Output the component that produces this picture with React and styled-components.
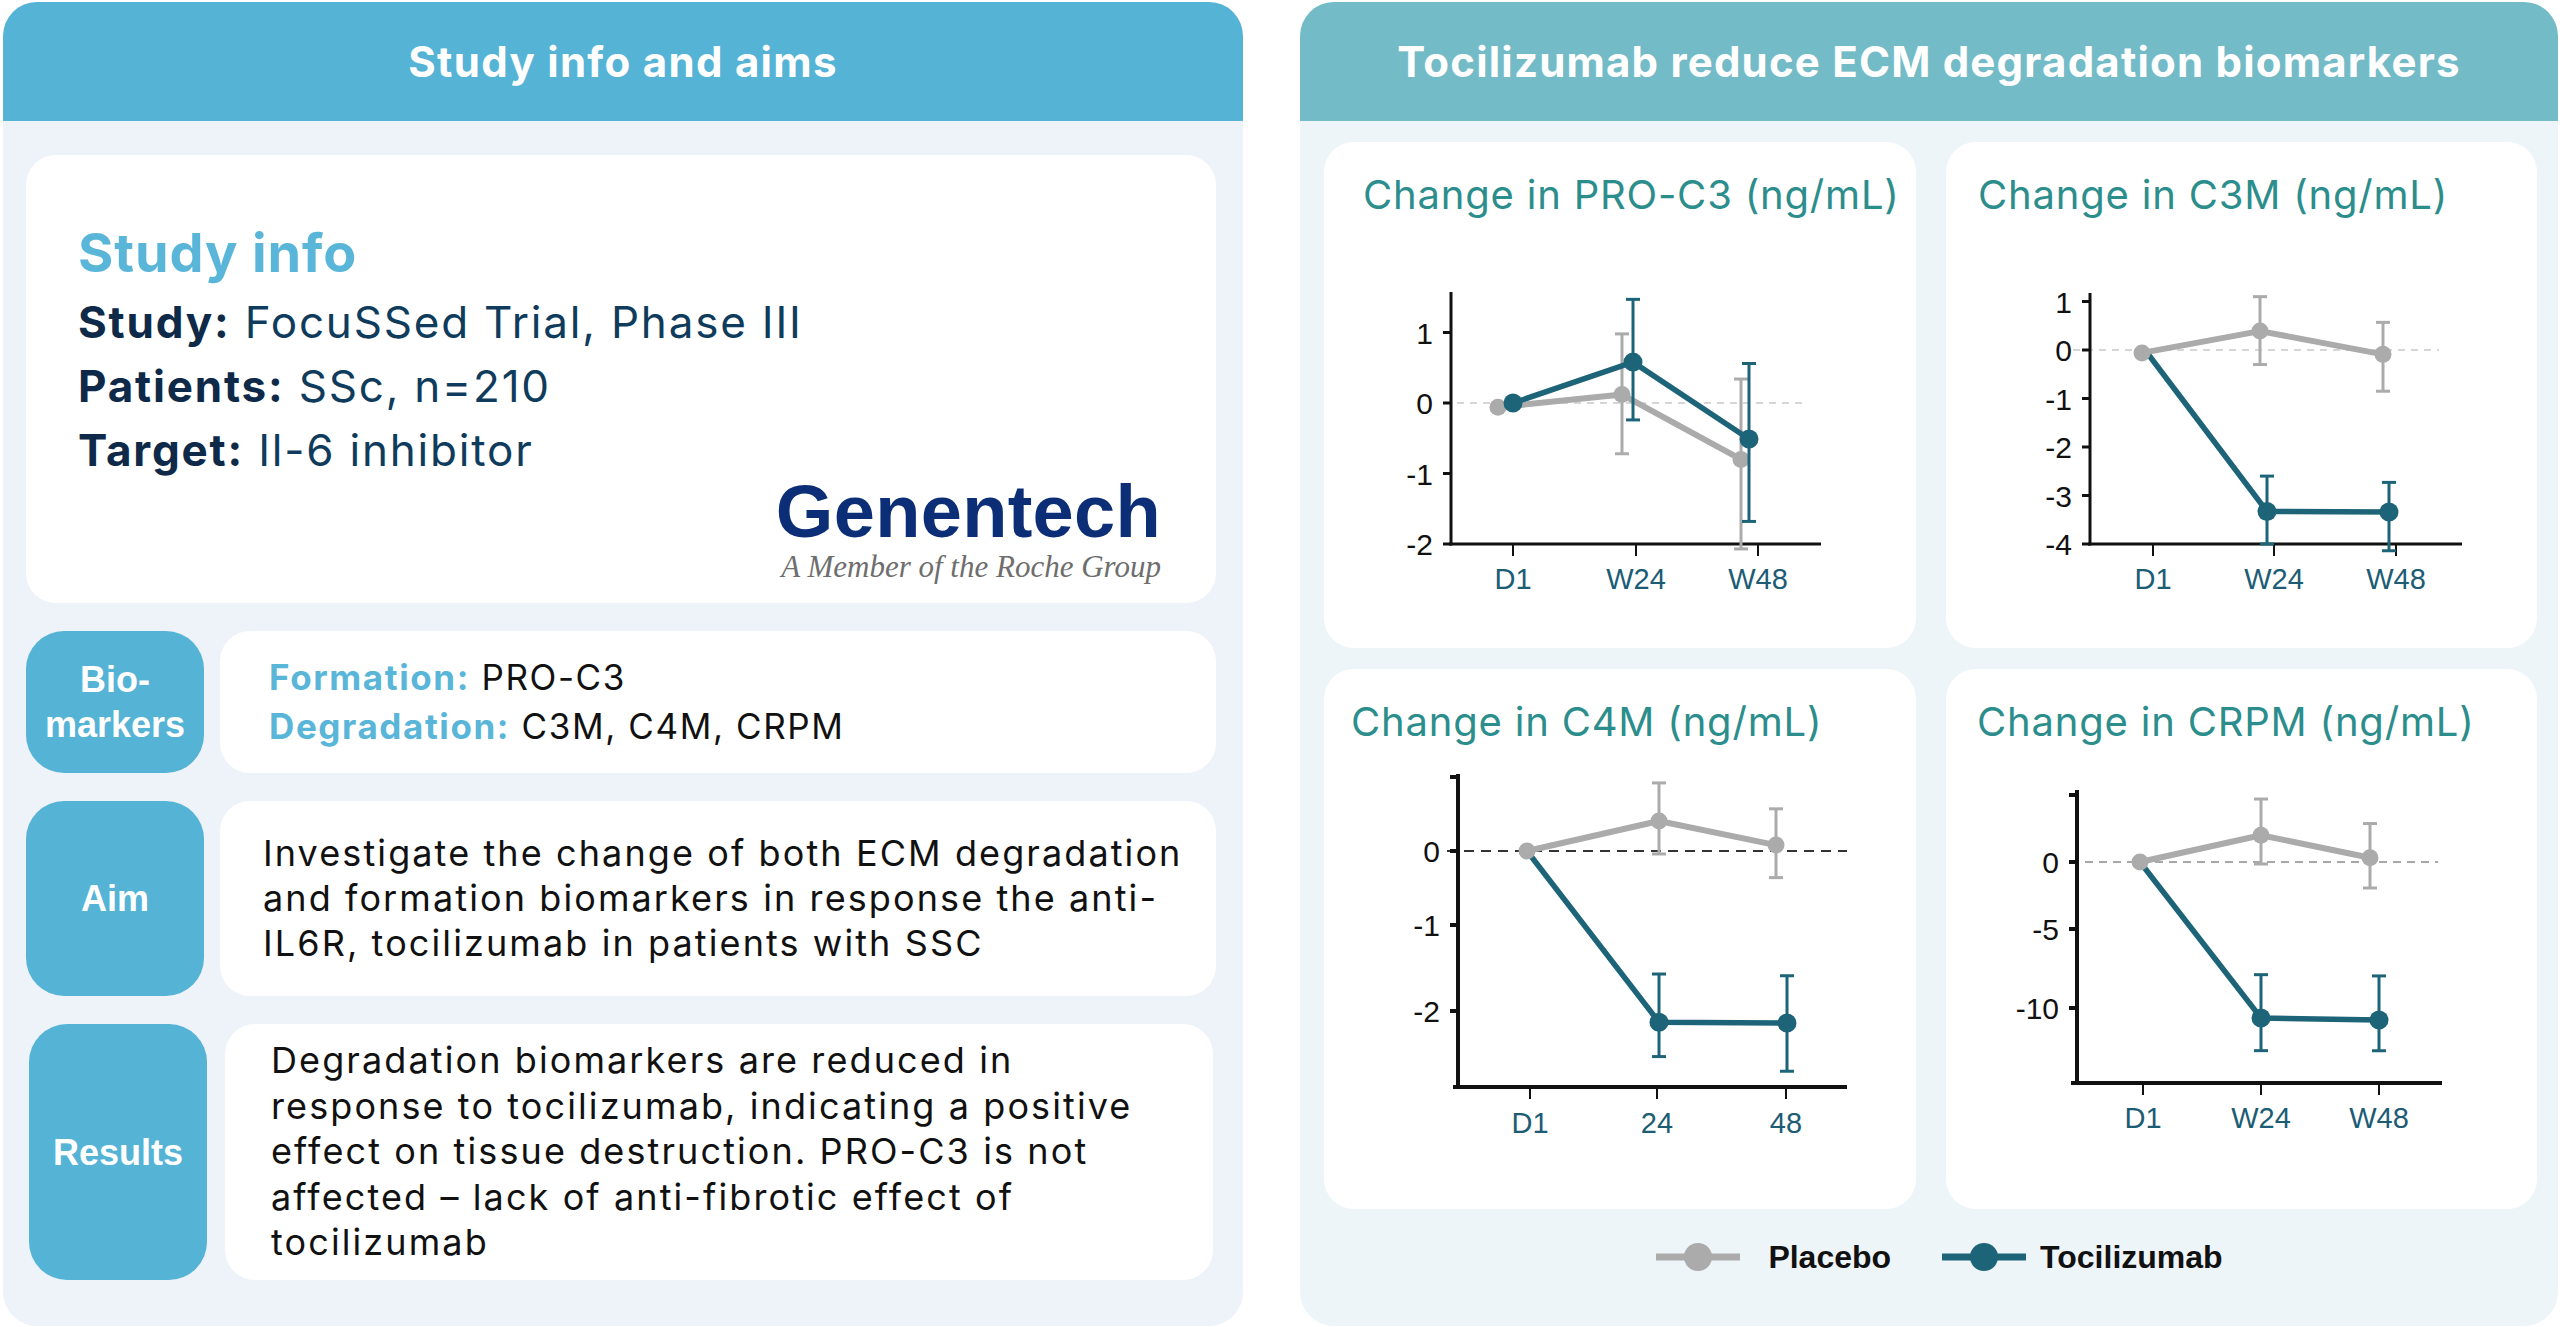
import React from 'react'
import styled, { createGlobalStyle } from 'styled-components'

const GlobalStyle = createGlobalStyle`
    html, body {
        margin: 0;
        padding: 0;
        background: #ffffff;
    }
    * {
        box-sizing: border-box;
    }
`

const SANS = `'Inter', 'Open Sans', sans-serif`
const ARIAL = `'Liberation Sans', Arial, sans-serif`

const PLACEBO = '#ababab'
const TOC = '#1d6479'

// ---------- chart data ----------
const charts = [
    {
        title: 'Change in PRO-C3 (ng/mL)', indent: 39, height: 425,
        axisX: 127, axisTop: 69, axisBottom: 321, axisLeft: 125, axisRight: 497, axisW: 3,
        stops: [[1, 109.5], [0, 180], [-1, 250.5], [-2, 321]],
        ticks: [[1, '1'], [0, '0'], [-1, '-1'], [-2, '-2']],
        xTicks: [189, 312, 434], xLabels: ['D1', 'W24', 'W48'], labelY: 356,
        zero: { x1: 120, x2: 480, color: '#c9c9c9', w: 1.6, dash: '7 6' },
        placebo: { xs: [174, 298, 417], vs: [-0.06, 0.12, -0.8], err: [null, [0.98, -0.72], [0.34, -2.07]] },
        toc: { xs: [189, 309, 425], vs: [0, 0.58, -0.51], err: [null, [1.47, -0.24], [0.56, -1.68]] },
        tocOnTop: true,
    },
    {
        title: 'Change in C3M (ng/mL)', indent: 32, height: 425,
        axisX: 144, axisTop: 70, axisBottom: 321, axisLeft: 142, axisRight: 516, axisW: 3,
        stops: [[0, 127], [-4, 321]],
        ticks: [[1, '1'], [0, '0'], [-1, '-1'], [-2, '-2'], [-3, '-3'], [-4, '-4']],
        xTicks: [207, 328, 450], xLabels: ['D1', 'W24', 'W48'], labelY: 356,
        zero: { x1: 127, x2: 493, color: '#c9c9c9', w: 1.6, dash: '7 6' },
        placebo: { xs: [196, 314, 437], vs: [-0.06, 0.39, -0.09], err: [null, [1.1, -0.3], [0.57, -0.85]] },
        toc: { xs: [199, 321, 443], vs: [0, -3.33, -3.34], err: [null, [-2.6, -4.0], [-2.73, -4.14]] },
        tocOnTop: false,
    },
    {
        title: 'Change in C4M (ng/mL)', indent: 27, height: 459,
        axisX: 134, axisTop: 24, axisBottom: 337, axisLeft: 129, axisRight: 523, axisW: 4,
        stops: [[1, 27], [0, 101], [-1, 175], [-2, 261]],
        ticks: [[1, ''], [0, '0'], [-1, '-1'], [-2, '-2']],
        xTicks: [206, 333, 462], xLabels: ['D1', '24', '48'], labelY: 373,
        zero: { x1: 123, x2: 523, color: '#333333', w: 2.2, dash: '10 7' },
        placebo: { xs: [203, 335, 452], vs: [0, 0.405, 0.08], err: [null, [0.92, -0.04], [0.57, -0.36]] },
        toc: { xs: [203, 335, 463], vs: [0, -2.13, -2.14], err: [null, [-1.57, -2.53], [-1.59, -2.7]] },
        tocOnTop: false,
    },
    {
        title: 'Change in CRPM (ng/mL)', indent: 31, height: 459,
        axisX: 131, axisTop: 40, axisBottom: 333, axisLeft: 125, axisRight: 496, axisW: 4,
        stops: [[5, 45], [0, 112], [-5, 179], [-10, 258]],
        ticks: [[5, ''], [0, '0'], [-5, '-5'], [-10, '-10']],
        xTicks: [197, 315, 433], xLabels: ['D1', 'W24', 'W48'], labelY: 368,
        zero: { x1: 125, x2: 492, color: '#a8a8a8', w: 1.8, dash: '8 6' },
        placebo: { xs: [194, 315, 424], vs: [0, 2.0, 0.32], err: [null, [4.7, -0.15], [2.87, -1.94]] },
        toc: { xs: [194, 315, 433], vs: [0, -10.63, -10.76], err: [null, [-7.89, -12.7], [-7.97, -12.7]] },
        tocOnTop: false,
    },
]

// piecewise linear value -> pixel, extrapolating with the end segments
function makeScale(stops) {
    return v => {
        let i = 0
        while (i < stops.length - 2 && v < stops[i + 1][0]) i++
        const [v0, p0] = stops[i]
        const [v1, p1] = stops[i + 1]
        return p0 + (v - v0) * (p1 - p0) / (v1 - v0)
    }
}

// ---------- layout ----------
const Page = styled.div`
    display: flex;
    gap: 57px;
    width: 2560px;
    height: 1327px;
    padding: 2px 0 1px 3px;
    background: #fff;
`
const Panel = styled.section`
    width: ${p => p.$w}px;
    display: flex;
    flex-direction: column;
    border-radius: 34px;
    overflow: hidden;
    background: ${p => p.$bg};
`
const PanelHeader = styled.header`
    flex: none;
    height: 119px;
    display: flex;
    align-items: center;
    justify-content: center;
    background: ${p => p.$bg};
    color: #fff;
    font-family: ${SANS};
    font-weight: 700;
    font-size: 42px;
    letter-spacing: ${p => p.$ls}px;
`
const LeftBody = styled.div`
    flex: 1;
    display: flex;
    flex-direction: column;
    gap: 28px;
    padding: 34px 27px 0 23px;
`
const StudyCard = styled.div`
    height: 448px;
    background: #fff;
    border-radius: 30px;
    padding: 66px 55px 0 52px;
    display: flex;
    flex-direction: column;
    font-family: ${SANS};
`
const StudyTitle = styled.h2`
    margin: 0 0 5px;
    font-size: 54px;
    line-height: 64px;
    font-weight: 700;
    color: #5ab6d9;
    letter-spacing: 0.9px;
`
const InfoLine = styled.div`
    font-size: 44px;
    line-height: 64px;
    letter-spacing: 1.8px;
    color: #0f3c5c;
    white-space: nowrap;
    b {
        color: #0e2a48;
        font-weight: 700;
    }
`
const Logo = styled.div`
    align-self: flex-end;
    display: flex;
    flex-direction: column;
    align-items: flex-end;
    margin-top: 1px;
`
const LogoWord = styled.div`
    font-family: ${ARIAL};
    font-weight: 700;
    font-size: 74px;
    line-height: 58px;
    color: #0b2e77;
    letter-spacing: 0.3px;
`
const LogoTag = styled.div`
    margin-top: 8px;
    font-family: 'Liberation Serif', 'Times New Roman', serif;
    font-style: italic;
    font-size: 31px;
    line-height: 36px;
    color: #6e6e6e;
`
const Row = styled.div`
    height: ${p => p.$h}px;
    display: grid;
    grid-template-columns: 178px 1fr;
    gap: ${p => p.$gap || 16}px;
    padding: 0 ${p => p.$inset || 0}px;
`
const RowLabel = styled.div`
    background: #55b3d6;
    border-radius: 38px;
    display: flex;
    align-items: center;
    justify-content: center;
    text-align: center;
    color: #fff;
    font-family: ${ARIAL};
    font-weight: 700;
    font-size: 36px;
    line-height: 45px;
`
const RowCard = styled.div`
    background: #fff;
    border-radius: 30px;
    display: flex;
    align-items: center;
    padding-left: ${p => p.$pad}px;
    font-family: ${SANS};
    font-size: ${p => p.$fs}px;
    line-height: ${p => p.$lh}px;
    letter-spacing: ${p => p.$ls}px;
    color: #111;
    white-space: nowrap;
`
const Accent = styled.b`
    color: #5ab6d9;
    font-weight: 700;
`
const RightBody = styled.div`
    flex: 1;
    display: flex;
    flex-direction: column;
    padding: 21px 21px 0 24px;
`
const ChartGrid = styled.div`
    display: grid;
    grid-template-columns: 592px 591px;
    grid-template-rows: 506px 540px;
    column-gap: 30px;
    row-gap: 21px;
`
const ChartCard = styled.div`
    background: #fff;
    border-radius: 30px;
    display: flex;
    flex-direction: column;
    overflow: hidden;
`
const ChartTitle = styled.h3`
    margin: 0;
    padding: 25px 0 0 ${p => p.$indent}px;
    height: 81px;
    font-family: ${SANS};
    font-weight: 400;
    font-size: 40px;
    line-height: 56px;
    letter-spacing: 0.8px;
    color: #2c8e8c;
    white-space: nowrap;
`
const Legend = styled.div`
    height: 96px;
    display: flex;
    align-items: center;
    justify-content: center;
    padding-left: 18px;
    gap: 51px;
`
const LegendItem = styled.div`
    display: flex;
    align-items: center;
    gap: ${p => p.$gap}px;
    font-family: ${ARIAL};
    font-weight: 700;
    font-size: 32px;
    color: #111;
`

// ---------- chart ----------
function Series({ s, y, color, r, lw, skipFirst }) {
    const pts = s.xs.map((x, i) => [x, y(s.vs[i])])
    return (
        <g>
            {s.err.map((e, i) => e && (
                <g key={i} stroke={color} strokeWidth="3">
                    <line x1={pts[i][0]} x2={pts[i][0]} y1={y(e[0])} y2={y(e[1])} />
                    <line x1={pts[i][0] - 7} x2={pts[i][0] + 7} y1={y(e[0])} y2={y(e[0])} />
                    <line x1={pts[i][0] - 7} x2={pts[i][0] + 7} y1={y(e[1])} y2={y(e[1])} />
                </g>
            ))}
            <polyline points={pts.map(p => p.join(',')).join(' ')} fill="none" stroke={color}
                strokeWidth={lw} strokeLinejoin="round" />
            {pts.map((p, i) => (skipFirst && i === 0) ? null : (
                <circle key={i} cx={p[0]} cy={p[1]} r={r} fill={color} />
            ))}
        </g>
    )
}

function Chart({ c }) {
    const y = makeScale(c.stops)
    const placebo = <Series s={c.placebo} y={y} color={PLACEBO} r={8.5} lw={6} />
    const toc = <Series s={c.toc} y={y} color={TOC} r={9.5} lw={5.5} skipFirst={!c.tocOnTop} />
    return (
        <ChartCard>
            <ChartTitle $indent={c.indent}>{c.title}</ChartTitle>
            <svg width="592" height={c.height} viewBox={`0 0 592 ${c.height}`}>
                <line x1={c.zero.x1} x2={c.zero.x2} y1={y(0)} y2={y(0)} stroke={c.zero.color}
                    strokeWidth={c.zero.w} strokeDasharray={c.zero.dash} />
                <g stroke="#111" strokeWidth={c.axisW} fill="none">
                    <line x1={c.axisX} x2={c.axisX} y1={c.axisTop} y2={c.axisBottom + c.axisW / 2} />
                    <line x1={c.axisLeft} x2={c.axisRight} y1={c.axisBottom} y2={c.axisBottom} />
                    {c.ticks.map(([v]) => (
                        <line key={v} x1={c.axisX - 8} x2={c.axisX} y1={y(v)} y2={y(v)} />
                    ))}
                </g>
                <g stroke="#111" strokeWidth="2">
                    {c.xTicks.map(x => <line key={x} x1={x} x2={x} y1={c.axisBottom} y2={c.axisBottom + 12} />)}
                </g>
                <g fontFamily={ARIAL} fontSize="30" fill="#111" textAnchor="end">
                    {c.ticks.map(([v, l]) => l && (
                        <text key={v} x={c.axisX - 18} y={y(v) + 11}>{l}</text>
                    ))}
                </g>
                <g fontFamily={ARIAL} fontSize="29" fill="#1c5c75" textAnchor="middle">
                    {c.xTicks.map((x, i) => <text key={x} x={x} y={c.labelY + 10}>{c.xLabels[i]}</text>)}
                </g>
                {c.tocOnTop ? <>{placebo}{toc}</> : <>{toc}{placebo}</>}
            </svg>
        </ChartCard>
    )
}

function LegendMark({ color }) {
    return (
        <svg width="84" height="32" viewBox="0 0 84 32">
            <line x1="0" x2="84" y1="16" y2="16" stroke={color} strokeWidth="7" />
            <circle cx="42" cy="16" r="14" fill={color} />
        </svg>
    )
}

export default function App() {
    return (
        <>
            <GlobalStyle />
            <Page>
                <Panel $w={1240} $bg="#eef2f9">
                    <PanelHeader $bg="#55b3d6" $ls={1.3}>Study info and aims</PanelHeader>
                    <LeftBody>
                        <StudyCard>
                            <StudyTitle>Study info</StudyTitle>
                            <InfoLine><b>Study:</b> FocuSSed Trial, Phase III</InfoLine>
                            <InfoLine><b>Patients:</b> SSc, n=210</InfoLine>
                            <InfoLine><b>Target:</b> Il-6 inhibitor</InfoLine>
                            <Logo>
                                <LogoWord>Genentech</LogoWord>
                                <LogoTag>A Member of the Roche Group</LogoTag>
                            </Logo>
                        </StudyCard>
                        <Row $h={142}>
                            <RowLabel>Bio-<br />markers</RowLabel>
                            <RowCard $pad={49} $fs={35} $lh={49} $ls={1.6}>
                                <div>
                                    <Accent>Formation:</Accent> PRO-C3<br />
                                    <Accent>Degradation:</Accent> C3M, C4M, CRPM
                                </div>
                            </RowCard>
                        </Row>
                        <Row $h={195}>
                            <RowLabel>Aim</RowLabel>
                            <RowCard $pad={43} $fs={36} $lh={45} $ls={2.1}>
                                <div>
                                    Investigate the change of both ECM degradation<br />
                                    and formation biomarkers in response the anti-<br />
                                    IL6R, tocilizumab in patients with SSC
                                </div>
                            </RowCard>
                        </Row>
                        <Row $h={256} $inset={3} $gap={18}>
                            <RowLabel>Results</RowLabel>
                            <RowCard $pad={46} $fs={36} $lh={45.5} $ls={2.1}>
                                <div>
                                    Degradation biomarkers are reduced in<br />
                                    response to tocilizumab, indicating a positive<br />
                                    effect on tissue destruction. PRO-C3 is not<br />
                                    affected – lack of anti-fibrotic effect of<br />
                                    tocilizumab
                                </div>
                            </RowCard>
                        </Row>
                    </LeftBody>
                </Panel>
                <Panel $w={1258} $bg="#eef5f8">
                    <PanelHeader $bg="#74bbc8" $ls={1.2}>Tocilizumab reduce ECM degradation biomarkers</PanelHeader>
                    <RightBody>
                        <ChartGrid>
                            {charts.map(c => <Chart key={c.title} c={c} />)}
                        </ChartGrid>
                        <Legend>
                            <LegendItem $gap={28}><LegendMark color={PLACEBO} />Placebo</LegendItem>
                            <LegendItem $gap={14}><LegendMark color={TOC} />Tocilizumab</LegendItem>
                        </Legend>
                    </RightBody>
                </Panel>
            </Page>
        </>
    )
}
